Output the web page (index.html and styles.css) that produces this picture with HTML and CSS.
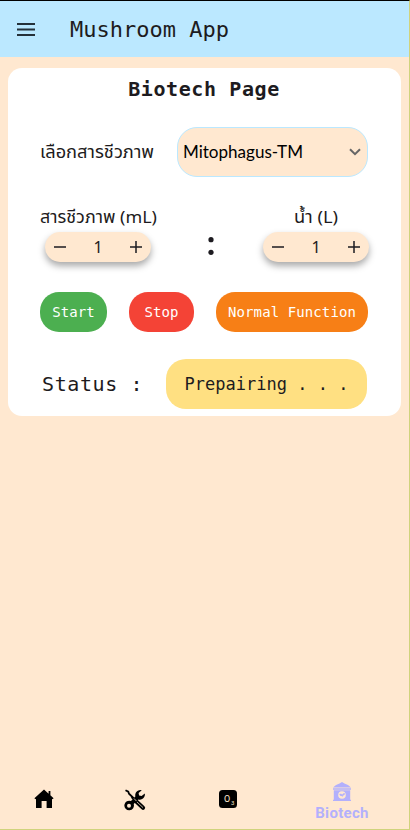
FILE: index.html
```html
<!DOCTYPE html>
<html lang="th">
<head>
<meta charset="utf-8">
<meta name="viewport" content="width=device-width, initial-scale=1">
<title>Mushroom App</title>
<link rel="stylesheet" href="styles.css">
</head>
<body>
<div class="app">
  <header class="appbar">
    <svg class="menu" width="18" height="13" viewBox="0 0 18 13"><path d="M0 1h18M0 6.5h18M0 12h18" stroke="#25313a" stroke-width="1.8"/></svg>
    <h1 class="appbar-title">Mushroom App</h1>
  </header>
  <main class="card">
    <h2 class="card-title">Biotech Page</h2>
    <div class="pick">
      <svg class="fit" width="115" height="30"><text x="0" y="21" textLength="114" lengthAdjust="spacingAndGlyphs">เลือกสารชีวภาพ</text></svg>
      <div class="select">
        <svg class="fit" width="122" height="30"><text x="0" y="21" textLength="120" lengthAdjust="spacingAndGlyphs">Mitophagus-TM</text></svg>
        <svg width="12" height="8" viewBox="0 0 12 8"><path d="M1 1.2l5 5 5-5" fill="none" stroke="#666" stroke-width="2"/></svg>
      </div>
    </div>
    <div class="ratio">
      <div class="amount">
        <svg class="fit" width="118" height="30"><text x="0" y="21" textLength="117" lengthAdjust="spacingAndGlyphs">สารชีวภาพ (mL)</text></svg>
        <div class="stepper">
          <svg width="14" height="14" viewBox="0 0 14 14"><path d="M1 7h12"/></svg>
          <span>1</span>
          <svg width="14" height="14" viewBox="0 0 14 14"><path d="M1 7h12M7 1v12"/></svg>
        </div>
      </div>
      <svg class="colon" width="6" height="18" viewBox="0 0 6 18"><circle cx="3" cy="2.7" r="2.6"/><circle cx="3" cy="15.3" r="2.6"/></svg>
      <div class="amount">
        <svg class="fit" width="45" height="30"><text x="0" y="21" textLength="44" lengthAdjust="spacingAndGlyphs">น้ำ (L)</text></svg>
        <div class="stepper">
          <svg width="14" height="14" viewBox="0 0 14 14"><path d="M1 7h12"/></svg>
          <span>1</span>
          <svg width="14" height="14" viewBox="0 0 14 14"><path d="M1 7h12M7 1v12"/></svg>
        </div>
      </div>
    </div>
    <div class="actions">
      <button class="btn start">Start</button>
      <button class="btn stop">Stop</button>
      <button class="btn normal">Normal Function</button>
    </div>
    <div class="status">
      <span class="status-label">Status :</span>
      <span class="status-value">Prepairing . . .</span>
    </div>
  </main>
  <nav class="nav">
    <a class="tab"><svg width="20" height="20" viewBox="0 0 20 20"><path d="M10 .5L.4 9.2l1 1.1.6-.5V19h5.6v-7h5v7H18V9.8l.6.5 1-1.1-3.2-2.9V2h-1.8v2.7z"/></svg></a>
    <a class="tab"><svg width="22" height="22" viewBox="0 0 22 22"><path d="M1.5 1.2l2.8 1.5.7 2 6 5.8" fill="none" stroke="#000" stroke-width="1.8"/><path d="M12.3 12.5l6.7 6.2" fill="none" stroke="#000" stroke-width="4.2" stroke-linecap="round"/><path d="M13 13l6 5.6" stroke="#ffe8d0" stroke-width=".7"/><path d="M17.8 1.2a5.2 5.2 0 0 0-6.4 6.3L7 12.1a4.8 4.8 0 1 0 2.7 2.9l4.6-4.5a5.2 5.2 0 0 0 6.5-6L17.6 7l-2.5-.4-.5-2.6z"/><circle cx="5" cy="16.7" r="2" fill="#ffe8d0"/><path d="M7.4 8.2l3.6 3.5" stroke="#000" stroke-width="1.6"/><path d="M10 9.5l2.5 2.6" stroke="#ffe8d0" stroke-width=".8"/></svg></a>
    <a class="tab tab-ozone"><svg width="18" height="18" viewBox="0 0 18 18"><rect width="18" height="18" rx="3.5"/><text class="ozone" x="5" y="12.3">O</text><text class="ozone-sub" x="12" y="15.2">3</text></svg></a>
    <a class="tab active"><svg width="18" height="20" viewBox="0 0 18 20"><path d="M0 5.4L3 3 6.5 1.5 9 0l2.5 1.5L15 3l3 2.4zM0 6.2h18v1.5H0zM.8 8.2h16.4v9.6h.8V19H0v-1.2h.8z"/><circle cx="9" cy="13" r="3.8" fill="#ffe8d0"/><path d="M6.3 12c2-.9 2.7.1 2.9.8.2-1 1-1.7 2.8-1.5-.1 1.7-.9 2.3-2.1 2.3L9.4 15l-.8-1c-1.2.1-2-.6-2.3-2z"/></svg><span>Biotech</span></a>
  </nav>
</div>
</body>
</html>
```
FILE: styles.css
```css
* { box-sizing: border-box; }
body { margin: 0; background: #ffe8d0; color: #1d1b20; font-family: "DejaVu Sans Mono", monospace; }
.app { width: 410px; height: 830px; display: flex; flex-direction: column; border-top: 1px solid #000; border-right: 1px solid #d0d37c; border-bottom: 1px solid #d0d37c; }
.appbar { height: 56px; flex: none; display: flex; align-items: center; gap: 35px; padding: 1px 0 0 17px; background: #bbe8ff; }
.menu { flex: none; }
.appbar-title { margin: 0; font-size: 22px; font-weight: 400; line-height: 28px; }
.card { flex: none; margin: 11px 8px 0; height: 348px; border-radius: 14px; background: #fff; display: flex; flex-direction: column; padding: 7px 33px 7px 32px; }
.card-title { margin: 0; text-align: center; font-size: 20px; line-height: 28px; letter-spacing: .6px; }
.fit { display: block; overflow: visible; flex: none; }
.fit text { font: 17px "Noto Sans Thai", Lato, sans-serif; fill: #1d1b20; }
.pick { margin-top: 24px; display: flex; align-items: center; justify-content: space-between; height: 50px; }
.select { width: 191px; height: 50px; flex: none; border: 1px solid #bbe8ff; border-radius: 20px; background: #ffe8d0; display: flex; align-items: center; justify-content: space-between; padding: 0 6px 0 5px; }
.select text { font-family: Lato, sans-serif; fill: #000; }
.ratio { margin-top: 25px; display: flex; justify-content: space-between; height: 62px; }
.amount { display: flex; flex-direction: column; align-items: center; }
.amount + .colon + .amount { width: 106px; margin-right: -1px; }
.stepper { width: 106px; height: 30px; flex: none; border-radius: 15px; background: #ffe8d0; box-shadow: 0 4px 7px rgba(0,0,0,.34); display: flex; align-items: center; justify-content: space-between; padding: 0 8px; font: 16px "Noto Sans", sans-serif; }
.amount:first-child .stepper { margin-left: -2px; }
.stepper path { stroke: #1d1b20; stroke-width: 1.5; }
.colon { margin: 35px 0 0; fill: #1d1b20; }
.actions { margin-top: 28px; display: flex; justify-content: space-between; height: 40px; }
.btn { border: 0; height: 40px; border-radius: 19px; padding: 0; color: #fff; font: 14px/20px "DejaVu Sans Mono", monospace; letter-spacing: .1px; }
.start { width: 67px; background: #4caf50; }
.stop { width: 65px; background: #f44336; }
.normal { width: 152px; background: #f77f16; }
.status { margin-top: 27px; height: 50px; display: flex; align-items: center; justify-content: space-between; padding: 0 1px; }
.status-label { margin-left: 1px; font-size: 20px; letter-spacing: .6px; white-space: nowrap; }
.status-value { width: 201px; height: 50px; line-height: 50px; border-radius: 20px; background: #ffe082; font-size: 17px; text-align: center; white-space: nowrap; }
.nav { margin-top: auto; height: 58px; flex: none; display: flex; }
.tab { width: 91.5px; flex: none; display: flex; justify-content: center; padding-top: 18px; margin-left: -2px; margin-right: 2px; }
.tab-ozone { padding-top: 19px; padding-left: 2px; }
.active { width: 139px; flex-direction: column; align-items: center; justify-content: flex-start; padding-top: 11px; color: #b3b0fc; font: 700 15px/20px Roboto, sans-serif; letter-spacing: .3px; }
.active svg { fill: #b3b0fc; flex: none; }
.active span { margin-top: 1px; }
.ozone { font: 9px Roboto, sans-serif; fill: #ffe8d0; }
.ozone-sub { font: 6px Roboto, sans-serif; fill: #ffe8d0; }
```
